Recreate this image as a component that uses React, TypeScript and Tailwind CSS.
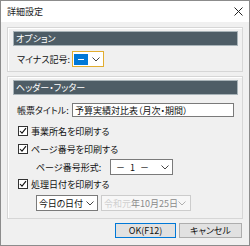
import React from "react";

const Chevron = ({ color = "#444" }: { color?: string }) => (
  <svg width="8" height="5" viewBox="0 0 8 5" className="shrink-0">
    <polyline points="0.5,0.5 4,4 7.5,0.5" fill="none" stroke={color} strokeWidth="1" />
  </svg>
);

const Check = () => (
  <div className="w-[10px] h-[10px] border border-[#333] bg-white flex items-center justify-center shrink-0">
    <svg width="8" height="8" viewBox="0 0 8 8">
      <polyline points="1,4 3,6.2 7,1.2" fill="none" stroke="#111" strokeWidth="1.1" />
    </svg>
  </div>
);

const Header = ({ children }: { children: React.ReactNode }) => (
  <div className="ml-[5px] w-[225px] h-[15px] bg-[#4e5d66] border border-[#a8b3b8] flex items-center pl-[2px] text-white leading-none">
    {children}
  </div>
);

const CheckRow = ({ label, mt }: { label: string; mt: string }) => (
  <div className={`${mt} h-[12px] flex items-center pl-[10px] gap-[3px] leading-none text-[#111]`}>
    <Check />
    <span>{label}</span>
  </div>
);

export default function App() {
  return (
    <div
      className="w-[250px] h-[246px] flex flex-col border border-[#8c8c8c] bg-[#f0f0f0] text-[9px] text-[#111] [font-feature-settings:'palt']"
      style={{ fontFamily: '"Noto Sans CJK JP", "Noto Sans", sans-serif' }}
    >
      {/* title bar */}
      <div className="h-[21px] bg-white flex items-center justify-between pl-[6px] pr-[6px] shrink-0">
        <span className="leading-none text-[#222]">詳細設定</span>
        <svg width="9" height="9" viewBox="0 0 9 9">
          <path d="M0.5 0.5 L8.5 8.5 M8.5 0.5 L0.5 8.5" stroke="#222" strokeWidth="1" />
        </svg>
      </div>

      <div className="flex flex-col px-[6px]">
        {/* group 1 */}
        <div className="mt-[5px] h-[45px] border border-[#d6d6d6] shadow-[inset_1px_1px_0_#ffffff] flex flex-col pt-[3px]">
          <Header>オプション</Header>
          <div className="mt-[5px] flex items-center pl-[9px]">
            <span className="w-[55px] leading-none">マイナス記号:</span>
            <div className="w-[32px] h-[16px] border border-[#e2ad2f] bg-white flex items-center justify-between pl-[1px] pr-[3px]">
              <div className="w-[14px] h-[11px] bg-[#0078d7] flex items-center justify-center">
                <div className="w-[6px] h-[1px] bg-white" />
              </div>
              <Chevron />
            </div>
          </div>
        </div>

        {/* group 2 */}
        <div className="mt-[4px] h-[143px] border border-[#d6d6d6] shadow-[inset_1px_1px_0_#ffffff] flex flex-col pt-[3px]">
          <Header>ヘッダー・フッター</Header>
          <div className="mt-[8px] flex items-center pl-[9px]">
            <span className="w-[55px] leading-none">帳票タイトル:</span>
            <div className="w-[162px] h-[14px] border border-[#7a7a7a] bg-white flex items-center pl-[2px] leading-none">
              予算実績対比表（月次・期間）
            </div>
          </div>
          <CheckRow mt="mt-[8px]" label="事業所名を印刷する" />
          <CheckRow mt="mt-[6px]" label="ページ番号を印刷する" />
          <div className="mt-[4px] flex items-center pl-[28px]">
            <span className="w-[74px] leading-none">ページ番号形式:</span>
            <div className="w-[63px] h-[16px] border border-[#7a7a7a] bg-white flex items-center justify-between pl-[5px] pr-[3px] leading-none">
              <span className="flex items-center gap-[5px]">
                <span>－</span>
                <span>1</span>
                <span>－</span>
              </span>
              <Chevron />
            </div>
          </div>
          <CheckRow mt="mt-[3px]" label="処理日付を印刷する" />
          <div className="mt-[5px] flex items-center pl-[28px] gap-[3px]">
            <div className="w-[62px] h-[16px] border border-[#7a7a7a] bg-white flex items-center justify-between pl-[2px] pr-[3px] leading-none">
              <span className="tracking-[-0.2px]">今日の日付</span>
              <Chevron />
            </div>
            <div className="w-[90px] h-[16px] border border-[#cccccc] bg-[#f7f7f7] flex items-center justify-between pl-[2px] pr-[4px] leading-none">
              <span className="text-[#8a8a8a]">
                <span className="text-[#d0d0d0]">令和元</span>年10月25日
              </span>
              <Chevron color="#b0b0b0" />
            </div>
          </div>
        </div>

        {/* buttons */}
        <div className="mt-[4px] flex justify-end gap-[3px] pr-[1px]">
          <div className="w-[61px] h-[15px] border border-[#0078d7] bg-[#e1e1e1] flex items-center justify-center leading-none">
            OK(F12)
          </div>
          <div className="w-[63px] h-[15px] border border-[#adadad] bg-[#e1e1e1] flex items-center justify-center leading-none">
            キャンセル
          </div>
        </div>
      </div>
    </div>
  );
}
